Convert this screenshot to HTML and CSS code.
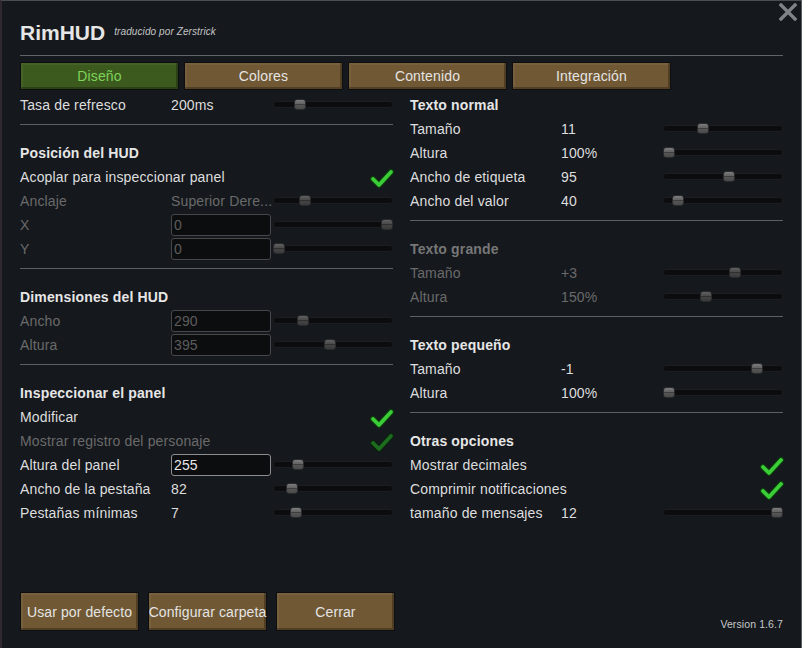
FILE: index.html
```html
<!DOCTYPE html>
<html lang="es">
<head>
<meta charset="utf-8">
<title>RimHUD</title>
<link rel="stylesheet" href="styles.css">
</head>
<body>
<div class="window">
  <button class="close" aria-label="Cerrar">
    <svg width="18" height="18" viewBox="0 0 18 18"><path d="M2 2 L16 16 M16 2 L2 16" stroke="#7f8286" stroke-width="3.4" stroke-linecap="square"/></svg>
  </button>

  <header class="head">
    <h1 class="title">RimHUD</h1>
    <span class="subtitle">traducido por Zerstrick</span>
  </header>

  <nav class="tabs">
    <div class="tab active">Diseño</div>
    <div class="tab">Colores</div>
    <div class="tab">Contenido</div>
    <div class="tab">Integración</div>
  </nav>

  <main class="content">
    <section class="col">
      <div class="row"><span class="lbl">Tasa de refresco</span><span class="val">200ms</span><div class="slider"><span class="knob" style="left:21px"></span></div></div>
      <div class="sep"></div>

      <div class="row head-row"><span class="lbl">Posición del HUD</span></div>
      <div class="row chk"><span class="lbl">Acoplar para inspeccionar panel</span><svg class="tick" width="24" height="22" viewBox="0 0 24 22"><path d="M3 12 L9 18 L21 5" fill="none" stroke="#0d3d0d" stroke-width="6" stroke-linecap="round" stroke-linejoin="round"/><path d="M3 12 L9 18 L21 5" fill="none" stroke="#3bcd37" stroke-width="3.8" stroke-linecap="round" stroke-linejoin="round"/></svg></div>
      <div class="row off"><span class="lbl">Anclaje</span><span class="val trunc">Superior Dere...</span><div class="slider"><span class="knob" style="left:26px"></span></div></div>
      <div class="row off"><span class="lbl">X</span><span class="field">0</span><div class="slider"><span class="knob" style="left:108px"></span></div></div>
      <div class="row off"><span class="lbl">Y</span><span class="field">0</span><div class="slider"><span class="knob" style="left:0px"></span></div></div>
      <div class="sep"></div>

      <div class="row head-row"><span class="lbl">Dimensiones del HUD</span></div>
      <div class="row off"><span class="lbl">Ancho</span><span class="field">290</span><div class="slider"><span class="knob" style="left:24px"></span></div></div>
      <div class="row off"><span class="lbl">Altura</span><span class="field">395</span><div class="slider"><span class="knob" style="left:51px"></span></div></div>
      <div class="sep"></div>

      <div class="row head-row"><span class="lbl">Inspeccionar el panel</span></div>
      <div class="row chk"><span class="lbl">Modificar</span><svg class="tick" width="24" height="22" viewBox="0 0 24 22"><path d="M3 12 L9 18 L21 5" fill="none" stroke="#0d3d0d" stroke-width="6" stroke-linecap="round" stroke-linejoin="round"/><path d="M3 12 L9 18 L21 5" fill="none" stroke="#3bcd37" stroke-width="3.8" stroke-linecap="round" stroke-linejoin="round"/></svg></div>
      <div class="row chk off"><span class="lbl">Mostrar registro del personaje</span><svg class="tick" width="24" height="22" viewBox="0 0 24 22"><path d="M3 12 L9 18 L21 5" fill="none" stroke="#0b240c" stroke-width="6" stroke-linecap="round" stroke-linejoin="round"/><path d="M3 12 L9 18 L21 5" fill="none" stroke="#1e6c20" stroke-width="3.8" stroke-linecap="round" stroke-linejoin="round"/></svg></div>
      <div class="row"><span class="lbl">Altura del panel</span><span class="field live">255</span><div class="slider"><span class="knob" style="left:19px"></span></div></div>
      <div class="row"><span class="lbl">Ancho de la pestaña</span><span class="val">82</span><div class="slider"><span class="knob" style="left:13px"></span></div></div>
      <div class="row"><span class="lbl">Pestañas mínimas</span><span class="val">7</span><div class="slider"><span class="knob" style="left:17px"></span></div></div>
    </section>

    <section class="col">
      <div class="row head-row"><span class="lbl">Texto normal</span></div>
      <div class="row"><span class="lbl">Tamaño</span><span class="val">11</span><div class="slider"><span class="knob" style="left:34px"></span></div></div>
      <div class="row"><span class="lbl">Altura</span><span class="val">100%</span><div class="slider"><span class="knob" style="left:0px"></span></div></div>
      <div class="row"><span class="lbl">Ancho de etiqueta</span><span class="val">95</span><div class="slider"><span class="knob" style="left:60px"></span></div></div>
      <div class="row"><span class="lbl">Ancho del valor</span><span class="val">40</span><div class="slider"><span class="knob" style="left:9px"></span></div></div>
      <div class="sep"></div>

      <div class="row head-row off"><span class="lbl">Texto grande</span></div>
      <div class="row off"><span class="lbl">Tamaño</span><span class="val">+3</span><div class="slider"><span class="knob" style="left:66px"></span></div></div>
      <div class="row off"><span class="lbl">Altura</span><span class="val">150%</span><div class="slider"><span class="knob" style="left:37px"></span></div></div>
      <div class="sep"></div>

      <div class="row head-row"><span class="lbl">Texto pequeño</span></div>
      <div class="row"><span class="lbl">Tamaño</span><span class="val">-1</span><div class="slider"><span class="knob" style="left:88px"></span></div></div>
      <div class="row"><span class="lbl">Altura</span><span class="val">100%</span><div class="slider"><span class="knob" style="left:0px"></span></div></div>
      <div class="sep"></div>

      <div class="row head-row"><span class="lbl">Otras opciones</span></div>
      <div class="row chk"><span class="lbl">Mostrar decimales</span><svg class="tick" width="24" height="22" viewBox="0 0 24 22"><path d="M3 12 L9 18 L21 5" fill="none" stroke="#0d3d0d" stroke-width="6" stroke-linecap="round" stroke-linejoin="round"/><path d="M3 12 L9 18 L21 5" fill="none" stroke="#3bcd37" stroke-width="3.8" stroke-linecap="round" stroke-linejoin="round"/></svg></div>
      <div class="row chk"><span class="lbl">Comprimir notificaciones</span><svg class="tick" width="24" height="22" viewBox="0 0 24 22"><path d="M3 12 L9 18 L21 5" fill="none" stroke="#0d3d0d" stroke-width="6" stroke-linecap="round" stroke-linejoin="round"/><path d="M3 12 L9 18 L21 5" fill="none" stroke="#3bcd37" stroke-width="3.8" stroke-linecap="round" stroke-linejoin="round"/></svg></div>
      <div class="row"><span class="lbl">tamaño de mensajes</span><span class="val">12</span><div class="slider"><span class="knob" style="left:108px"></span></div></div>
    </section>
  </main>

  <footer class="foot">
    <div class="buttons">
      <div class="btn">Usar por defecto</div>
      <div class="btn">Configurar carpeta</div>
      <div class="btn">Cerrar</div>
    </div>
    <span class="version">Version 1.6.7</span>
  </footer>
</div>
</body>
</html>
```

FILE: styles.css
```css
* { box-sizing: border-box; }

html, body {
  margin: 0;
  padding: 0;
  background: #15181d;
}

body {
  font-family: "Liberation Sans", Arial, sans-serif;
  font-size: 14px;
  letter-spacing: 0.15px;
  color: #dedede;
}

.window {
  position: relative;
  width: 802px;
  height: 648px;
  display: flex;
  flex-direction: column;
  background: #15181d;
  border-top: 1px solid #4a4d52;
  border-left: 2px solid #2f292f;
  border-right: 1px solid #5a5d61;
  padding: 20px 18px 17px 18px;
}

.close {
  position: absolute;
  top: 2px;
  right: 4px;
  width: 18px;
  height: 18px;
  padding: 0;
  border: 0;
  background: none;
  display: block;
}
.close svg { display: block; }

.head {
  display: flex;
  align-items: flex-start;
  gap: 9px;
  height: 35px;
  border-bottom: 1px solid #606367;
}

.title {
  margin: 0;
  font-size: 21px;
  line-height: 24px;
  font-weight: bold;
  letter-spacing: 0;
  color: #e6e6e6;
}

.subtitle {
  padding-top: 5px;
  font-size: 10px;
  line-height: 12px;
  font-style: italic;
  letter-spacing: 0.1px;
  color: #c4c4c4;
}

.tabs {
  display: flex;
  gap: 5px;
  margin-top: 6px;
}

.tab, .btn {
  background: #6f5833;
  border: 1px solid #0e0e0e;
  box-shadow: inset -2px -2px 0 rgba(0,0,0,0.28), inset 2px 2px 0 rgba(255,255,255,0.05);
  color: #e4e4e4;
  display: flex;
  align-items: center;
  justify-content: center;
  white-space: nowrap;
}

.tab {
  width: 159px;
  height: 28px;
  font-size: 14px;
}

.tab.active {
  background: #3c5a1e;
  color: #7ed35a;
}

.content {
  flex: 1;
  display: flex;
  gap: 17px;
  margin-top: 3px;
}

.col {
  width: 373px;
  display: flex;
  flex-direction: column;
}

.row {
  display: grid;
  grid-template-columns: 151px 102px 120px;
  align-items: center;
  height: 24px;
  white-space: nowrap;
}

.row.chk {
  grid-template-columns: 1fr auto;
}

.head-row .lbl {
  font-weight: bold;
  color: #e6e6e6;
}

.off .lbl, .off .val {
  color: #6a6a6a;
}
.head-row.off .lbl { color: #777; }

.trunc {
  overflow: hidden;
}

.tick {
  display: block;
  margin-top: 2px;
  margin-right: -1px;
}

.sep {
  height: 1px;
  background: #5c5f63;
  margin: 7px 0 16px;
  flex: none;
}

.field {
  width: 100px;
  height: 22px;
  border: 1px solid #45474a;
  border-radius: 3px;
  background: #0c0d0f;
  color: #5c5c5c;
  padding-left: 2px;
  display: flex;
  align-items: center;
}

.field.live {
  border-color: #8c8e90;
  color: #e8e8e8;
}

.slider {
  position: relative;
  height: 7px;
  margin-top: -2px;
  border-radius: 4px;
  background: #0b0c0e;
  box-shadow: inset 0 0 0 1px #1b1d20;
}

.knob {
  position: absolute;
  top: -2px;
  width: 12px;
  height: 11px;
  border-radius: 3px;
  border: 1px solid #2a2b2d;
  background: linear-gradient(to bottom, #7c7c7c 0%, #626262 42%, #3e3e3e 46%, #3e3e3e 56%, #555 60%, #4a4a4a 100%);
}

.off .knob {
  background: linear-gradient(to bottom, #606060 0%, #4a4a4a 42%, #2f2f2f 46%, #2f2f2f 56%, #434343 60%, #3a3a3a 100%);
}

.foot {
  display: flex;
  justify-content: space-between;
  align-items: flex-end;
}

.buttons {
  display: flex;
  gap: 9px;
}

.btn {
  width: 119px;
  height: 39px;
  font-size: 14px;
  letter-spacing: 0.1px;
}

.version {
  font-size: 10.5px;
  letter-spacing: 0.1px;
  color: #c8c8c8;
  line-height: 12px;
  padding-bottom: 1px;
}
```
